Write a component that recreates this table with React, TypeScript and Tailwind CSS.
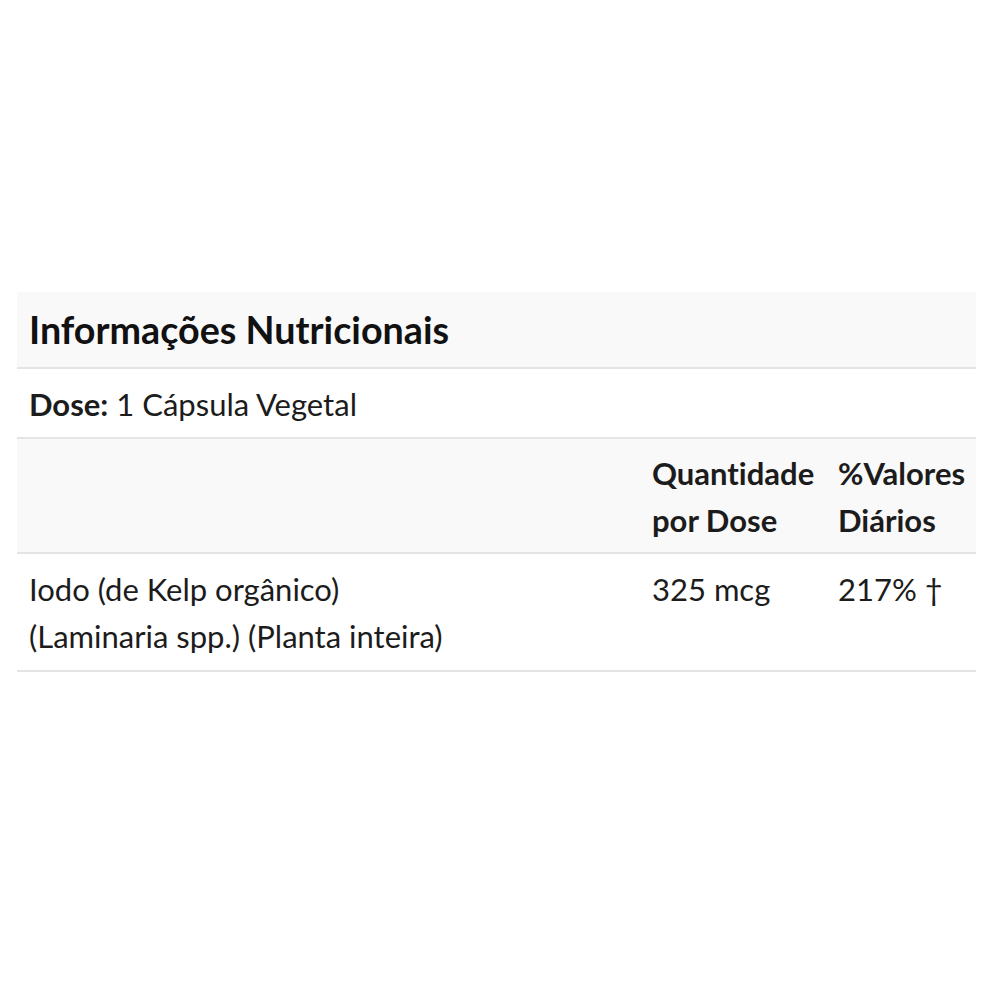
import React from "react";

export default function App() {
  return (
    <div className="w-[1000px] h-[1000px] bg-white pt-[292px] px-[17px] [font-variant-ligatures:none]" style={{ fontFamily: "Lato, 'Noto Sans', sans-serif" }}>
      <div className="w-[959px] text-[#1c1c1c]">
        <div className="bg-[#f9f9f9] h-[77px] px-3 flex items-center border-b-2 border-[#e4e4e4]">
          <h2 className="text-[37.7px] font-bold leading-none text-[#111]">Informações Nutricionais</h2>
        </div>
        <div className="h-[70px] px-3 flex items-center border-b-2 border-[#e4e4e4] text-[31px]">
          <span className="pt-[2px]"><span className="font-bold">Dose:</span> 1 Cápsula Vegetal</span>
        </div>
        <div className="bg-[#f9f9f9] flex border-b-2 border-[#e4e4e4] text-[31px] font-bold leading-[46.5px] pt-[11px] pb-[9px]">
          <div className="w-[623px] px-3"></div>
          <div className="w-[186px] px-3">Quantidade<br />por Dose</div>
          <div className="w-[150px] px-3">%Valores<br />Diários</div>
        </div>
        <div className="flex border-b-2 border-[#e4e4e4] text-[31px] leading-[46.5px] pt-[12px] pb-[11px]">
          <div className="w-[623px] px-3">Iodo (de Kelp orgânico)<br />(Laminaria spp.) (Planta inteira)</div>
          <div className="w-[186px] px-3">325 mcg</div>
          <div className="w-[150px] px-3">217%&nbsp;†</div>
        </div>
      </div>
    </div>
  );
}
